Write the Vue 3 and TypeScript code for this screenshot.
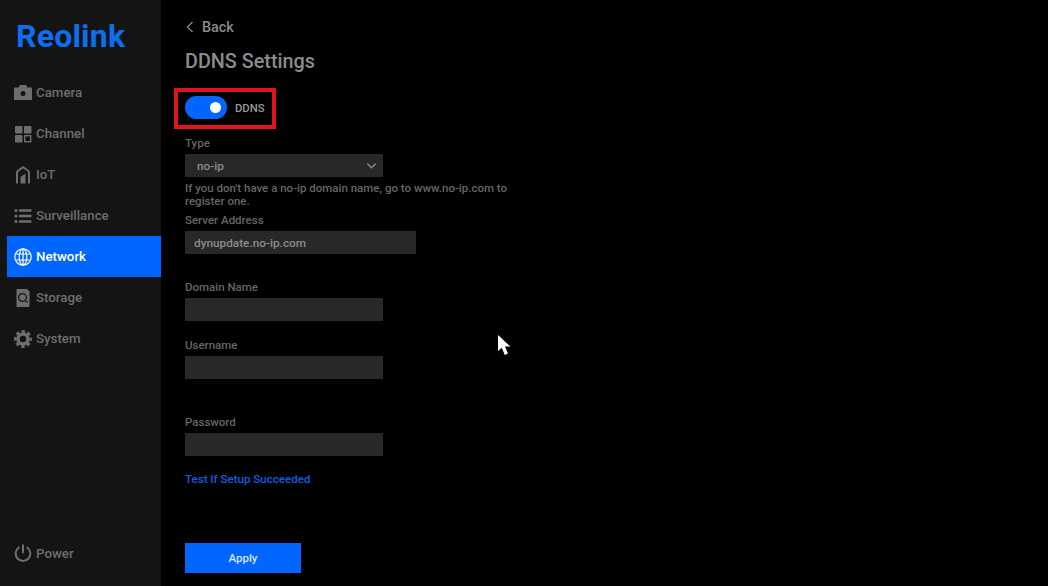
<script setup lang="ts">
const menu = [
  { key: 'camera', label: 'Camera' },
  { key: 'channel', label: 'Channel' },
  { key: 'iot', label: 'IoT' },
  { key: 'surveillance', label: 'Surveillance' },
  { key: 'network', label: 'Network' },
  { key: 'storage', label: 'Storage' },
  { key: 'system', label: 'System' },
]
</script>

<template>
  <div class="screen">
    <aside class="sidebar">
      <div class="logo">Reolink</div>
      <nav class="menu">
        <div
          v-for="item in menu"
          :key="item.key"
          class="menu-item"
          :class="{ active: item.key === 'network' }"
        >
          <svg class="icon" viewBox="0 0 18 18">
            <template v-if="item.key === 'camera'">
              <path fill-rule="evenodd" fill="currentColor" d="M.5 3.500h4L6 1h6l1.500 2.500h4a.5.5 0 0 1 .5.500v11.500a.5.5 0 0 1-.5.500H.5a.5.5 0 0 1-.5-.500V4a.5.5 0 0 1 .5-.500ZM9 7a2.500 2.500 0 1 0 0 5 2.500 2.500 0 0 0 0-5Z" />
            </template>
            <template v-else-if="item.key === 'channel'">
              <rect x="1" y="1" width="7.500" height="7.500" rx="1" fill="currentColor" />
              <rect x="10" y="1" width="7.500" height="7.500" rx="1" fill="currentColor" />
              <rect x="1" y="10" width="7.500" height="7.500" rx="1" fill="currentColor" />
              <rect x="10.700" y="10.700" width="6" height="6" fill="none" stroke="currentColor" stroke-width="1.400" />
            </template>
            <template v-else-if="item.key === 'iot'">
              <path fill="none" stroke="currentColor" stroke-width="2" d="M3 17.500V6.500Q3 5.500 4 4.800L9 1.200l5 3.600q1 .7 1 1.700v11" />
              <path fill="currentColor" d="M6.500 17.500v-6.500L11.500 7.500v10Z" />
            </template>
            <template v-else-if="item.key === 'surveillance'">
              <g fill="currentColor">
                <circle cx="2" cy="3.500" r="1.600" />
                <circle cx="2" cy="9" r="1.600" />
                <circle cx="2" cy="14.500" r="1.600" />
                <rect x="5" y="2.300" width="12.500" height="2.400" rx="0.500" />
                <rect x="5" y="7.800" width="12.500" height="2.400" rx="0.500" />
                <rect x="5" y="13.300" width="12.500" height="2.400" rx="0.500" />
              </g>
            </template>
            <template v-else-if="item.key === 'network'">
              <g fill="none" stroke="currentColor" stroke-width="1.200">
                <circle cx="9" cy="9" r="8.200" />
                <ellipse cx="9" cy="9" rx="3.800" ry="8.200" />
                <path d="M9 .8v16.400M1.500 6h15M1.500 12h15" />
              </g>
            </template>
            <template v-else-if="item.key === 'storage'">
              <path fill="currentColor" d="M3.500 0H13l2.500 2.500V17a1 1 0 0 1-1 1h-11a1 1 0 0 1-1-1V1a1 1 0 0 1 1-1Z" />
              <g fill="none" stroke="#141414" stroke-width="1.200">
                <circle cx="8.500" cy="8.500" r="3.900" />
                <path d="M11.300 11.300l2.400 2.400" />
              </g>
            </template>
            <template v-else>
              <circle cx="9" cy="9" r="5" fill="none" stroke="currentColor" stroke-width="3.600" />
              <circle cx="9" cy="9" r="7.600" fill="none" stroke="currentColor" stroke-width="2.800" stroke-dasharray="3.400 2.570" stroke-dashoffset="1.700" />
            </template>
          </svg>
          <span>{{ item.label }}</span>
        </div>
      </nav>
      <div class="menu-item power">
        <svg class="icon" viewBox="0 0 18 18">
          <path fill="none" stroke="currentColor" stroke-width="2" stroke-linecap="round" d="M9 1.200v7.300M4.800 3.500a7.400 7.400 0 1 0 8.400 0" />
        </svg>
        <span>Power</span>
      </div>
    </aside>

    <main class="content">
      <div class="back">
        <svg class="chevron-left" viewBox="0 0 8 12">
          <path fill="none" stroke="currentColor" stroke-width="1.300" d="M6.500 1 1.500 6l5 5" />
        </svg>
        <span>Back</span>
      </div>
      <h1 class="title">DDNS Settings</h1>

      <div class="toggle-row">
        <div class="toggle"><span class="knob"></span></div>
        <span class="toggle-label">DDNS</span>
      </div>

      <label class="label type-label">Type</label>
      <div class="field select">
        <span>no-ip</span>
        <svg class="chevron-down" viewBox="0 0 12 8">
          <path fill="none" stroke="currentColor" stroke-width="1.500" d="M1.500 1.500 6 6l4.500-4.500" />
        </svg>
      </div>
      <p class="hint">If you don't have a no-ip domain name, go to www.no-ip.com to register one.</p>

      <label class="label server-label">Server Address</label>
      <div class="field wide">dynupdate.no-ip.com</div>

      <label class="label domain-label">Domain Name</label>
      <div class="field"></div>

      <label class="label user-label">Username</label>
      <div class="field"></div>

      <label class="label pass-label">Password</label>
      <div class="field"></div>

      <a class="link">Test If Setup Succeeded</a>
      <button class="apply">Apply</button>
    </main>

    <svg class="cursor" viewBox="0 0 14 22">
      <path fill="#fff" d="M0 0v16l3.800-3.200L6.800 20l3.200-1.400-3-7h5.500Z" />
    </svg>
  </div>
</template>

<style scoped>
.screen {
  position: relative;
  display: flex;
  width: 1048px;
  height: 586px;
  overflow: hidden;
  background: #000;
  font-family: Roboto, "Liberation Sans", sans-serif;
}
.sidebar {
  display: flex;
  flex-direction: column;
  width: 161px;
  height: 586px;
  padding-left: 7px;
  box-sizing: border-box;
  background: #141414;
}
.logo {
  height: 72px;
  margin-left: 9px;
  padding-top: 18px;
  box-sizing: border-box;
  color: #0c6ff0;
  font-size: 32px;
  line-height: 37px;
  font-weight: 700;
  letter-spacing: 0.2px;
}
.menu {
  flex: 1;
}
.menu-item {
  display: flex;
  align-items: center;
  gap: 4px;
  height: 41.05px;
  padding-left: 7px;
  color: #6e6e6e;
  font-size: 13.3px;
  font-weight: 500;
}
.menu-item.active {
  background: #0066ff;
  color: #fff;
}
.power {
  margin-bottom: 12px;
}
.icon {
  width: 18px;
  height: 18px;
  flex-shrink: 0;
}
.content {
  display: flex;
  flex-direction: column;
  align-items: flex-start;
  padding-left: 24px;
}
.back {
  display: flex;
  align-items: center;
  gap: 8px;
  height: 20px;
  margin-top: 17px;
  margin-left: 1px;
  color: #8a8a8a;
  font-size: 14.4px;
  font-weight: 500;
}
.chevron-left {
  width: 8px;
  height: 12px;
}
.title {
  margin: 12px 0 0;
  color: #8c8c8c;
  font-size: 19.8px;
  line-height: 26px;
  font-weight: 500;
}
.toggle-row {
  display: flex;
  align-items: center;
  gap: 8px;
  box-sizing: border-box;
  width: 102px;
  height: 41px;
  margin: 13px 0 0 -11px;
  padding: 4px 0 6px 7px;
  border: 4px solid #e0141c;
}
.toggle {
  position: relative;
  width: 42px;
  height: 23px;
  flex-shrink: 0;
  border-radius: 12px;
  background: #0066ff;
}
.knob {
  position: absolute;
  top: 6px;
  left: 25px;
  width: 11px;
  height: 11px;
  border-radius: 50%;
  background: #fff;
}
.toggle-label {
  margin-top: 2px;
  color: #9a9a9a;
  font-size: 11.3px;
  font-weight: 500;
}
.label {
  color: #666;
  font-size: 11.5px;
  line-height: 14px;
  font-weight: 500;
}
.type-label {
  margin-top: 7px;
}
.server-label {
  margin-top: 5px;
}
.domain-label {
  margin-top: 26px;
}
.user-label {
  margin-top: 17px;
}
.pass-label {
  margin-top: 36px;
}
.field {
  width: 198px;
  height: 23px;
  margin-top: 4px;
  padding: 0 9px;
  box-sizing: border-box;
  background: #282828;
  color: #8c8c8c;
  font-size: 11.8px;
  line-height: 24px;
  font-weight: 500;
}
.field.wide {
  width: 231px;
}
.select {
  display: flex;
  align-items: center;
  justify-content: space-between;
  padding-left: 12px;
  padding-right: 6px;
}
.chevron-down {
  width: 11px;
  height: 8px;
}
.hint {
  width: 335px;
  margin: 5px 0 0;
  color: #666;
  font-size: 11.5px;
  line-height: 13px;
  font-weight: 500;
}
.link {
  margin-top: 16px;
  color: #0a5fe0;
  font-size: 11.55px;
  line-height: 14px;
  font-weight: 500;
}
.apply {
  width: 116px;
  height: 30px;
  margin-top: 57px;
  border: none;
  background: #0066ff;
  color: #d8e6ff;
  font-family: inherit;
  font-size: 11.5px;
  font-weight: 500;
}
.cursor {
  position: absolute;
  left: 498px;
  top: 335px;
  width: 14px;
  height: 22px;
}
</style>
